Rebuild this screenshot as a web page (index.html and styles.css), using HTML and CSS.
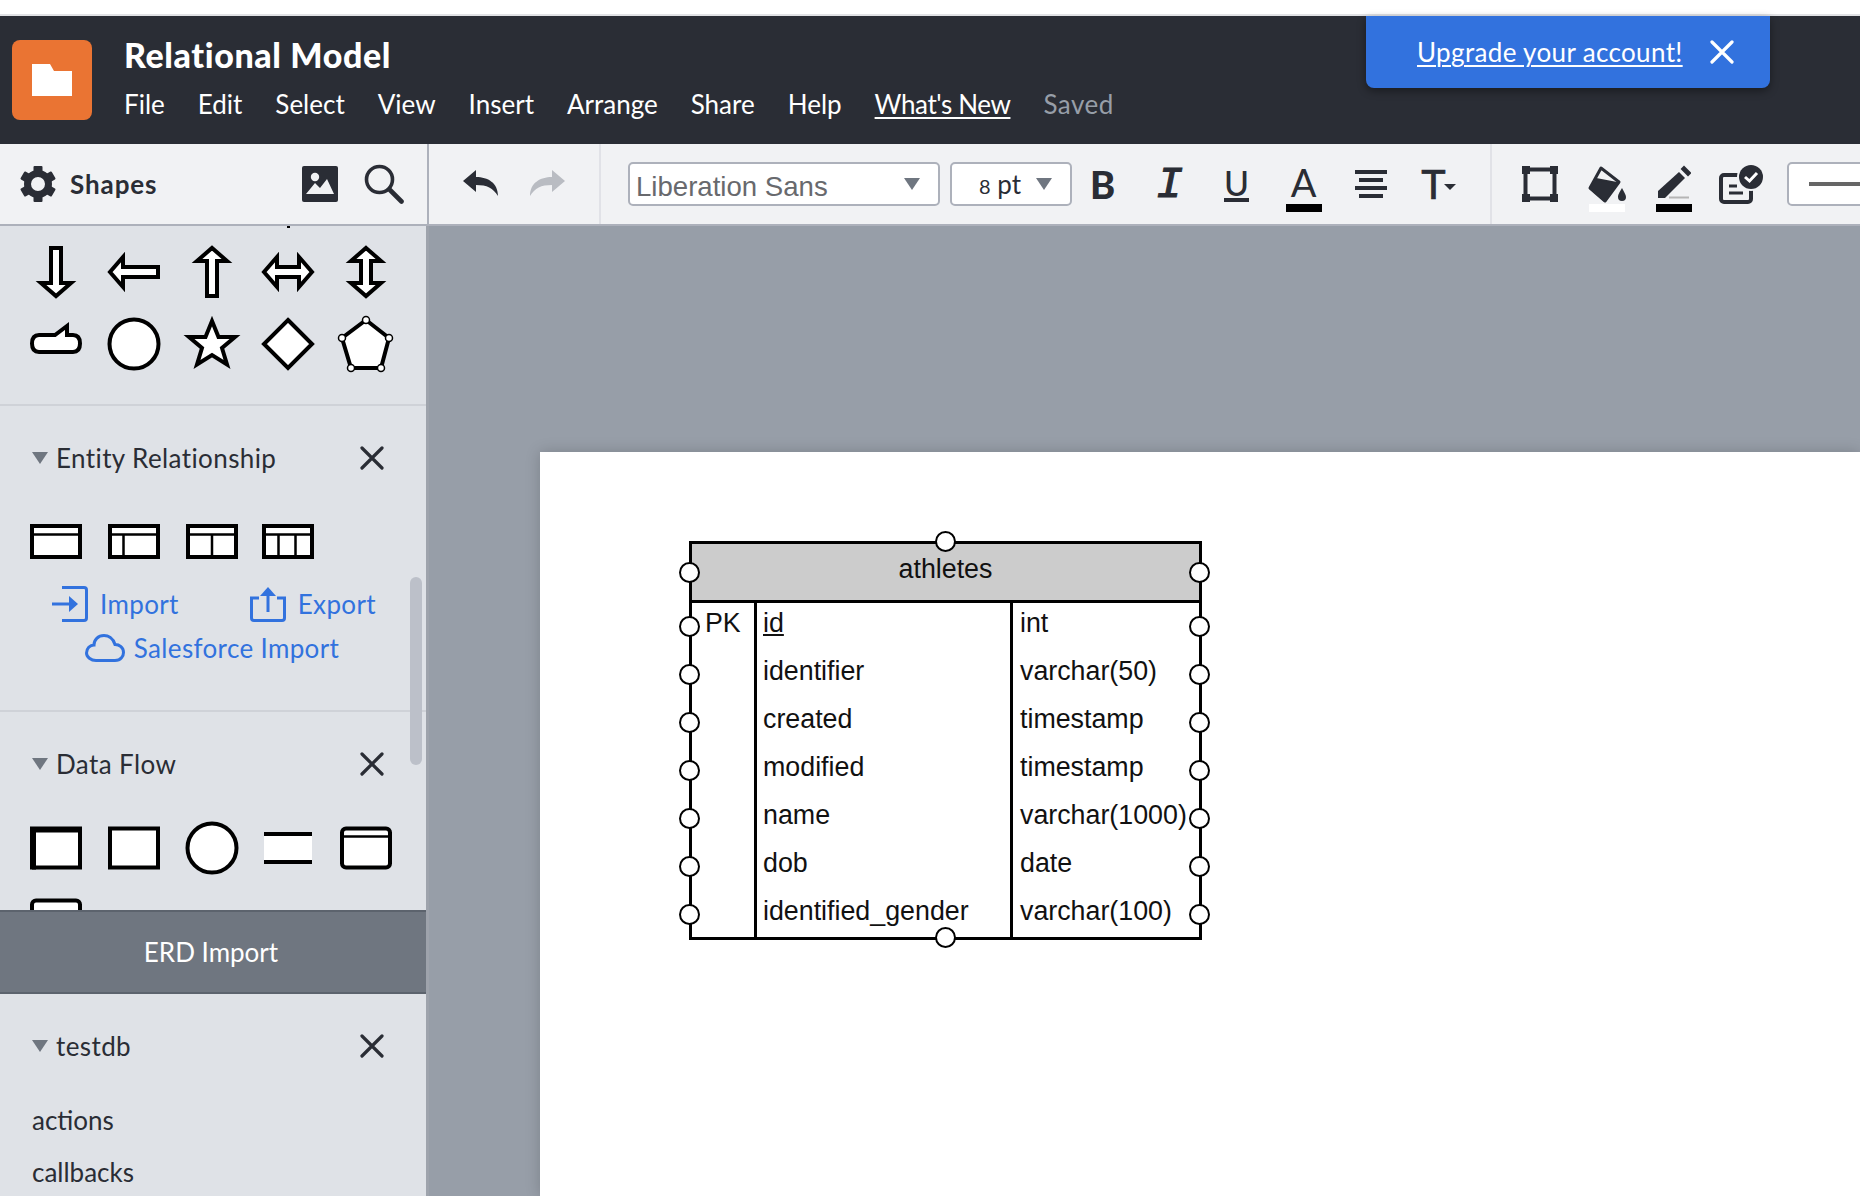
FILE: index.html
```html
<!DOCTYPE html>
<html lang="en">
<head>
    <meta charset="UTF-8">
    <title>Relational Model</title>
    <link rel="stylesheet" href="styles.css">
</head>
<body>
    <div class="top-strip"></div>

    <header class="app-bar">
        <div class="logo">
            <svg width="80" height="80" viewBox="0 0 80 80"><path d="M20 24H38L42 31H60V56H20Z" fill="#fff"/></svg>
        </div>
        <div class="doc">
            <div class="doc-title">Relational Model</div>
            <nav class="menu">
                <a>File</a>
                <a>Edit</a>
                <a>Select</a>
                <a>View</a>
                <a>Insert</a>
                <a>Arrange</a>
                <a>Share</a>
                <a>Help</a>
                <a class="menu-link">What's New</a>
                <span class="saved">Saved</span>
            </nav>
        </div>
        <div class="upgrade">
            <a class="upgrade-link">Upgrade your account!</a>
            <svg width="24" height="24" viewBox="0 0 24 24"><path d="M2 2L22 22M22 2L2 22" stroke="#fff" stroke-width="3.2" stroke-linecap="round"/></svg>
        </div>
    </header>

    <div class="toolbar">
        <div class="tb-shapes">
            <svg class="gear" width="36" height="36" viewBox="0 0 36 36" fill="#2a2d35">
                <circle cx="18" cy="18" r="10.5" fill="none" stroke="#2a2d35" stroke-width="7"/>
                <rect x="13.5" y="0" width="9" height="8" rx="1"/>
                <rect x="13.5" y="0" width="9" height="8" rx="1" transform="rotate(60 18 18)"/>
                <rect x="13.5" y="0" width="9" height="8" rx="1" transform="rotate(120 18 18)"/>
                <rect x="13.5" y="0" width="9" height="8" rx="1" transform="rotate(180 18 18)"/>
                <rect x="13.5" y="0" width="9" height="8" rx="1" transform="rotate(240 18 18)"/>
                <rect x="13.5" y="0" width="9" height="8" rx="1" transform="rotate(300 18 18)"/>
            </svg>
            <span class="tb-shapes-label">Shapes</span>
            <svg class="tb-image" width="36" height="36" viewBox="0 0 36 36">
                <rect width="36" height="36" rx="2" fill="#2a2d35"/>
                <circle cx="13" cy="11" r="4.2" fill="#f1f2f4"/>
                <path d="M4 28L13 17L18 22L25 13L32 28Z" fill="#f1f2f4"/>
            </svg>
            <svg class="tb-search" width="40" height="40" viewBox="0 0 40 40" fill="none" stroke="#2a2d35">
                <circle cx="15.5" cy="15.5" r="13" stroke-width="3.6"/>
                <path d="M26 26L37.5 37.5" stroke-width="4.6" stroke-linecap="round"/>
            </svg>
        </div>
        <div class="tb-history">
            <svg width="35" height="26" viewBox="0 0 35 26" fill="#2a2d35"><path d="M0 11L13 0V7C25 7 35 13 35 26C30 18 24 15 13 15V22Z"/></svg>
            <svg width="35" height="26" viewBox="0 0 35 26" fill="#b9bcc2"><path d="M35 11L22 0V7C10 7 0 13 0 26C5 18 11 15 22 15V22Z"/></svg>
        </div>
        <div class="tb-format">
            <div class="select select-font">
                <span class="select-text">Liberation Sans</span>
                <span class="caret"></span>
            </div>
            <div class="select select-size">
                <span class="select-size-text"><span class="size-num">8</span> pt</span>
                <span class="caret"></span>
            </div>
            <div class="tool"><span class="glyph glyph-b">B</span></div>
            <div class="tool"><span class="glyph glyph-i">I</span></div>
            <div class="tool"><span class="glyph glyph-u">U</span></div>
            <div class="tool"><span class="glyph glyph-a">A</span><i class="swatch"></i></div>
            <div class="tool">
                <svg width="32" height="40" viewBox="0 0 32 40" fill="#2a2d35">
                    <rect x="0" y="6" width="32" height="4"/>
                    <rect x="4" y="14" width="24" height="4"/>
                    <rect x="0" y="22" width="32" height="4"/>
                    <rect x="4" y="30" width="24" height="4"/>
                </svg>
            </div>
            <div class="tool"><span class="glyph glyph-t">T</span><i class="mini-caret"></i></div>
        </div>
        <div class="tb-shape-style">
            <div class="tool">
                <svg width="36" height="40" viewBox="0 0 36 40" fill="#2a2d35">
                    <rect x="3.5" y="5.5" width="29" height="29" fill="none" stroke="#2a2d35" stroke-width="4"/>
                    <rect x="0" y="2" width="8" height="8"/><rect x="28" y="2" width="8" height="8"/>
                    <rect x="0" y="30" width="8" height="8"/><rect x="28" y="30" width="8" height="8"/>
                </svg>
            </div>
            <div class="tool">
                <svg width="38" height="40" viewBox="-1 0 38 40" fill="#2a2d35">
                    <path d="M12 4L30 18L16 37L1 24Z" fill="none" stroke="#2a2d35" stroke-width="3" stroke-linejoin="round"/>
                    <path d="M1 24L7 15L28 19L16 37Z" stroke="#2a2d35" stroke-width="2" stroke-linejoin="round"/>
                    <path d="M33 24C30 29 29 31 29 33A4 4 0 0 0 37 33C37 31 35 28 33 24Z"/>
                </svg>
                <i class="swatch swatch-white"></i>
            </div>
            <div class="tool">
                <svg width="34" height="40" viewBox="0 0 34 40" fill="#2a2d35">
                    <path d="M1 34V27L22 8L28 14L8 34Z"/>
                    <path d="M25 5L27 3L33 9L31 11Z" stroke="#2a2d35" stroke-width="2"/>
                    <path d="M12 33.500H32" stroke="#b5b5b5" stroke-width="2"/>
                </svg>
                <i class="swatch"></i>
            </div>
            <div class="tool">
                <svg width="44" height="40" viewBox="0 0 44 40">
                    <rect x="2" y="11" width="30" height="27" rx="3" fill="none" stroke="#2a2d35" stroke-width="4"/>
                    <path d="M10 22H18M10 29H24" stroke="#2a2d35" stroke-width="3"/>
                    <circle cx="32" cy="13" r="14" fill="#f1f2f4"/>
                    <circle cx="32" cy="13" r="12" fill="#2a2d35"/>
                    <path d="M26 13L30.500 17L38 9" fill="none" stroke="#fff" stroke-width="3"/>
                </svg>
            </div>
            <div class="select select-line"><span class="line-sample"></span></div>
        </div>
    </div>

    <main class="workspace">
        <aside class="sidebar">
            <div class="shape-scroll">
                <div class="scrollbar"></div>

                <section class="shape-section shape-section-first">
                    <div class="sliver"></div>
                    <div class="shape-grid">
                        <svg class="sh" viewBox="0 0 60 60"><path d="M25 6H35V41H45L30 54L15 41H25Z"/></svg>
                        <svg class="sh" viewBox="0 0 60 60"><path d="M25 6H35V41H45L30 54L15 41H25Z" transform="rotate(90 30 30)"/></svg>
                        <svg class="sh" viewBox="0 0 60 60"><path d="M25 6H35V41H45L30 54L15 41H25Z" transform="rotate(180 30 30)"/></svg>
                        <svg class="sh" viewBox="0 0 60 60"><path d="M30 6L45 19H35V41H45L30 54L15 41H25V19H15Z" transform="rotate(90 30 30)"/></svg>
                        <svg class="sh" viewBox="0 0 60 60"><path d="M30 6L45 19H35V41H45L30 54L15 41H25V19H15Z"/></svg>

                        <svg class="sh" viewBox="0 0 60 60"><path d="M13 21H29L41 12V21H47Q54 21 54 29.500Q54 38 47 38H13Q6 38 6 29.500Q6 21 13 21Z"/></svg>
                        <svg class="sh" viewBox="0 0 60 60"><circle cx="30" cy="30" r="24.500"/></svg>
                        <svg class="sh" viewBox="0 0 60 60"><path d="M30 7L36.500 23H53L40 34L45 50.500L30 41L15 50.500L20 34L7 23H23.500Z"/></svg>
                        <svg class="sh" viewBox="0 0 60 60"><path d="M30 6L54 30L30 54L6 30Z"/></svg>
                        <svg class="sh" viewBox="0 0 60 60">
                            <path d="M30 6L53 24L45 54H15L6 24Z"/>
                            <g class="sh-dots"><circle cx="30" cy="6" r="3.500"/><circle cx="53" cy="24" r="3.500"/><circle cx="45" cy="54" r="3.500"/><circle cx="15" cy="54" r="3.500"/><circle cx="6" cy="24" r="3.500"/></g>
                        </svg>
                    </div>
                </section>

                <section class="shape-section">
                    <div class="section-head">
                        <span class="tri"></span>
                        <span class="section-name">Entity Relationship</span>
                        <svg class="close" width="24" height="24" viewBox="0 0 24 24"><path d="M2 2L22 22M22 2L2 22"/></svg>
                    </div>
                    <div class="shape-grid shape-grid-er">
                        <svg class="sh" viewBox="0 0 60 60"><rect x="6" y="14" width="48" height="31"/><path class="thin" d="M4 22.500H56"/></svg>
                        <svg class="sh" viewBox="0 0 60 60"><rect x="6" y="14" width="48" height="31"/><path class="thin" d="M4 22.500H56M19.500 22.500V45"/></svg>
                        <svg class="sh" viewBox="0 0 60 60"><rect x="6" y="14" width="48" height="31"/><path class="thin" d="M4 22.500H56M30 22.500V45"/></svg>
                        <svg class="sh" viewBox="0 0 60 60"><rect x="6" y="14" width="48" height="31"/><path class="thin" d="M4 22.500H56M20.500 22.500V45M37.500 22.500V45"/></svg>
                    </div>
                    <div class="import-links">
                        <div class="import-row">
                            <a class="import-link">
                                <svg width="36" height="36" viewBox="0 0 36 36" fill="none" stroke="#3272de" stroke-width="3"><path d="M10 1.500H32Q34.500 1.500 34.500 4V32Q34.500 34.500 32 34.500H10"/><path d="M0 18H24"/><path d="M17 10L26 18L17 26Z" fill="#3272de" stroke="none"/></svg>
                                Import
                            </a>
                            <a class="import-link">
                                <svg width="36" height="36" viewBox="0 0 36 36" fill="none" stroke="#3272de" stroke-width="3"><path d="M9 12H1.500V32Q1.500 34.500 4 34.500H32Q34.500 34.500 34.500 32V12H27"/><path d="M18 26V6"/><path d="M10 10L18 1L26 10Z" fill="#3272de" stroke="none"/></svg>
                                Export
                            </a>
                        </div>
                        <div class="import-row import-row-cloud">
                            <a class="import-link">
                                <svg width="40" height="28" viewBox="0 0 40 28" fill="none" stroke="#3272de" stroke-width="3"><path d="M11 26.500H30C36 26.500 38.500 22 38.500 18.500C38.500 13.500 34.500 10.500 30 10.500C28 4 23 1.500 19 1.500C13 1.500 9 6 9 11C5 11 1.500 14.500 1.500 19C1.500 23 6 26.500 11 26.500Z"/></svg>
                                Salesforce Import
                            </a>
                        </div>
                    </div>
                </section>

                <section class="shape-section">
                    <div class="section-head">
                        <span class="tri"></span>
                        <span class="section-name">Data Flow</span>
                        <svg class="close" width="24" height="24" viewBox="0 0 24 24"><path d="M2 2L22 22M22 2L2 22"/></svg>
                    </div>
                    <div class="shape-grid">
                        <svg class="sh" viewBox="0 0 60 60"><rect x="6" y="10.500" width="48" height="39"/><path class="thick" d="M8 9V51.500M4 12.500H54"/></svg>
                        <svg class="sh" viewBox="0 0 60 60"><rect x="6" y="10.500" width="48" height="39"/></svg>
                        <svg class="sh" viewBox="0 0 60 60"><circle cx="30" cy="30" r="24.500"/></svg>
                        <svg class="sh" viewBox="0 0 60 60"><rect class="bare" x="6" y="16" width="48" height="28"/><path d="M6 16H54M6 44H54"/></svg>
                        <svg class="sh" viewBox="0 0 60 60"><rect x="6" y="10.500" width="48" height="39" rx="4"/><path class="thin" d="M6 18.500H54"/></svg>
                        <svg class="sh" viewBox="0 0 60 60"><rect x="6" y="10.500" width="48" height="39" rx="4"/></svg>
                    </div>
                </section>
            </div>

            <button class="erd-import">ERD Import</button>

            <section class="db-section">
                <div class="section-head">
                    <span class="tri"></span>
                    <span class="section-name">testdb</span>
                    <svg class="close" width="24" height="24" viewBox="0 0 24 24"><path d="M2 2L22 22M22 2L2 22"/></svg>
                </div>
                <ul class="db-tables">
                    <li>actions</li>
                    <li>callbacks</li>
                </ul>
            </section>
        </aside>

        <div class="canvas">
            <div class="page">
                <div class="er-table">
                    <div class="er-row er-head">athletes</div>
                    <div class="er-row"><div class="er-cell er-key">PK</div><div class="er-cell"><u>id</u></div><div class="er-cell">int</div></div>
                    <div class="er-row"><div class="er-cell er-key"></div><div class="er-cell">identifier</div><div class="er-cell">varchar(50)</div></div>
                    <div class="er-row"><div class="er-cell er-key"></div><div class="er-cell">created</div><div class="er-cell">timestamp</div></div>
                    <div class="er-row"><div class="er-cell er-key"></div><div class="er-cell">modified</div><div class="er-cell">timestamp</div></div>
                    <div class="er-row"><div class="er-cell er-key"></div><div class="er-cell">name</div><div class="er-cell">varchar(1000)</div></div>
                    <div class="er-row"><div class="er-cell er-key"></div><div class="er-cell">dob</div><div class="er-cell">date</div></div>
                    <div class="er-row"><div class="er-cell er-key"></div><div class="er-cell">identified_gender</div><div class="er-cell">varchar(100)</div></div>
                </div>
            </div>
        </div>
    </main>
</body>
</html>
```

FILE: styles.css
```css
* {
    box-sizing: border-box;
}
html, body {
    height: 100%;
}
body {
    margin: 0;
    background-color: #fff;
    color: #2a2d35;
    font-family: 'Lato', sans-serif;
    overflow: hidden;
    display: flex;
    flex-direction: column;
}
.top-strip {
    height: 16px;
    flex: none;
    border-bottom: 2px solid #e1e2e5;
}

/* top bar */
.app-bar {
    height: 128px;
    flex: none;
    background-color: #2a2d35;
    color: #fff;
    display: flex;
    padding: 24px 0 0 12px;
    position: relative;
}
.logo {
    width: 80px;
    height: 80px;
    background-color: #ea7433;
    border-radius: 8px;
}
.logo svg {
    display: block;
}
.doc {
    margin-left: 32px;
}
.doc-title {
    font-size: 34px;
    font-weight: 900;
    letter-spacing: 0.6px;
    line-height: 38px;
    margin-top: -4px;
}
.menu {
    display: flex;
    gap: 33px;
    font-size: 26px;
    line-height: 34px;
    margin-top: 13px;
}
.menu-link {
    text-decoration: underline;
    text-underline-offset: 3px;
    letter-spacing: -0.4px;
}
.saved {
    color: #979ea8;
    letter-spacing: 0.5px;
}
.upgrade {
    position: absolute;
    top: 0;
    left: 1366px;
    width: 404px;
    height: 72px;
    background-color: #3272de;
    border-radius: 0 0 8px 8px;
    box-shadow: 0 3px 8px rgba(0, 0, 0, 0.4);
    display: flex;
    align-items: center;
    padding: 0 36px 0 51px;
    justify-content: space-between;
}
.upgrade-link {
    font-size: 26px;
    letter-spacing: 0.35px;
    text-decoration: underline;
    text-underline-offset: 3px;
    text-decoration-thickness: 2px;
}

/* toolbar */
.toolbar {
    height: 82px;
    flex: none;
    display: flex;
    background-color: #f1f2f4;
    border-bottom: 2px solid #adb1bb;
    overflow: hidden;
}
.tb-shapes {
    width: 429px;
    flex: none;
    display: flex;
    align-items: center;
    padding-left: 20px;
    border-right: 2px solid #adb1bb;
}
.tb-shapes-label {
    font-size: 26px;
    font-weight: 700;
    letter-spacing: 0.9px;
    margin-left: 14px;
    width: 232px;
}
.tb-search {
    margin-left: 26px;
}
.tb-history {
    width: 172px;
    flex: none;
    display: flex;
    align-items: center;
    gap: 32px;
    padding: 0 0 2px 34px;
    border-right: 2px solid #e1e2e7;
}
.tb-format {
    width: 891px;
    flex: none;
    display: flex;
    padding-left: 27px;
    border-right: 2px solid #e1e2e7;
}
.tb-shape-style {
    flex: none;
    display: flex;
    padding-left: 14px;
}
.select {
    height: 44px;
    margin-top: 18px;
    background-color: #fff;
    border: 2px solid #adb1bb;
    border-radius: 5px;
    display: flex;
    align-items: center;
    position: relative;
}
.select-font {
    width: 312px;
    padding-left: 6px;
}
.select-text {
    font-family: 'Liberation Sans', sans-serif;
    font-size: 27.6px;
    color: #68696d;
    padding-top: 6px;
}
.select-size {
    width: 122px;
    margin-left: 10px;
    margin-right: -3px;
    padding-left: 27px;
}
.select-size-text {
    font-size: 26px;
    color: #2a2d35;
}
.size-num {
    font-size: 20px;
}
.caret {
    position: absolute;
    top: 14px;
    right: 18px;
    border-left: 8px solid transparent;
    border-right: 8px solid transparent;
    border-top: 12px solid #6f7680;
}
.tool {
    width: 67px;
    flex: none;
    padding-top: 20px;
    display: flex;
    flex-direction: column;
    align-items: center;
    position: relative;
}
.glyph {
    height: 40px;
    line-height: 40px;
    color: #2a2d35;
    display: block;
}
.glyph-b {
    font-size: 38px;
    font-weight: 900;
}
.glyph-i {
    font-family: 'Liberation Mono', monospace;
    font-size: 45px;
    font-style: italic;
    -webkit-text-stroke: 1px #2a2d35;
    line-height: 44px;
}
.glyph-u {
    font-size: 34px;
    font-weight: 500;
    line-height: 34px;
    height: 38px;
    padding: 2px 0 0;
    border-bottom: 4px solid #2a2d35;
}
.glyph-a {
    font-size: 38px;
    line-height: 36px;
}
.glyph-t {
    font-family: 'Liberation Mono', monospace;
    font-size: 44px;
    -webkit-text-stroke: 0.6px #2a2d35;
    line-height: 47px;
    margin-right: 8px;
}
.mini-caret {
    position: absolute;
    top: 40px;
    left: 40px;
    border-left: 6px solid transparent;
    border-right: 6px solid transparent;
    border-top: 6px solid #2a2d35;
}
.swatch {
    width: 36px;
    height: 8px;
    background-color: #000;
    display: block;
}
.swatch-white {
    background-color: #fff;
}
.select-line {
    width: 120px;
    margin-left: 13px;
    flex: none;
    padding-left: 20px;
}
.line-sample {
    width: 80px;
    height: 4px;
    background-color: #666;
}

/* sidebar */
.workspace {
    flex: 1;
    display: flex;
    min-height: 0;
}
.sidebar {
    width: 429px;
    flex: none;
    background-color: #dfe2e7;
    border-right: 3px solid #9ea3ac;
    overflow: hidden;
}
.shape-scroll {
    height: 684px;
    overflow: hidden;
    position: relative;
}
.scrollbar {
    position: absolute;
    left: 410px;
    top: 351px;
    width: 12px;
    height: 188px;
    border-radius: 6px;
    background-color: #bcc0c9;
}
.sliver {
    width: 3px;
    height: 2px;
    margin-left: 287px;
    background-color: #000;
    margin-bottom: 8px;
}
.shape-section {
    padding-top: 28px;
    border-bottom: 2px solid #cfd2d8;
    padding-bottom: 40px;
}
.shape-section:last-child {
    border-bottom: none;
}
.shape-section-first {
    padding-top: 0;
    padding-bottom: 24px;
}
.section-head {
    height: 48px;
    display: flex;
    align-items: center;
    padding: 0 42px 0 32px;
}
.tri {
    border-left: 8px solid transparent;
    border-right: 8px solid transparent;
    border-top: 12px solid #6f7680;
    margin-right: 8px;
}
.section-name {
    font-size: 26px;
    letter-spacing: 0.4px;
    margin-right: auto;
}
.close path {
    stroke: #2a2d35;
    stroke-width: 3.2;
    stroke-linecap: round;
    fill: none;
}
.shape-grid {
    display: grid;
    grid-template-columns: 78px 78px 78px 74px 82px;
    grid-auto-rows: 72px;
    padding-left: 17px;
    justify-items: center;
    align-items: center;
}
.section-head + .shape-grid {
    margin-top: 24px;
}
.sh {
    width: 60px;
    height: 60px;
    display: block;
    fill: #fff;
    stroke: #000;
    stroke-width: 4;
}
.sh .thin {
    stroke-width: 2.5;
    fill: none;
}
.sh .thick {
    stroke-width: 4;
    fill: none;
}
.sh .bare {
    stroke: none;
}
.sh-dots {
    stroke-width: 1.5;
}
.import-links {
    margin-top: 4px;
}
.import-row {
    height: 44px;
    display: flex;
    justify-content: center;
    gap: 71px;
    padding-left: 2px;
}
.import-row-cloud {
    padding: 0 2px 0 0;
}
.import-row-cloud .import-link {
    gap: 9px;
}
.import-link {
    display: flex;
    align-items: center;
    gap: 12px;
    color: #3272de;
    font-size: 26px;
    letter-spacing: 0.35px;
}
.erd-import {
    display: block;
    width: 100%;
    height: 84px;
    padding: 0 4px 0 0;
    background-color: #6f7680;
    border: none;
    border-top: 2px solid #5c636d;
    border-bottom: 2px solid #5c636d;
    color: #fff;
    font-family: inherit;
    font-size: 26px;
}
.db-section {
    padding-top: 28px;
}
.db-tables {
    list-style: none;
    margin: 24px 0 0;
    padding: 0 0 0 32px;
    font-size: 26px;
    line-height: 52px;
}

/* canvas */
.canvas {
    flex: 1;
    background-color: #979ea8;
    padding: 226px 0 0 111px;
    overflow: hidden;
}
.page {
    height: 100%;
    background-color: #fff;
    box-shadow: 0 0 14px rgba(0, 0, 0, 0.18);
    padding: 89px 0 0 149px;
}
.er-table {
    width: 513px;
    border: 3px solid #000;
    position: relative;
    font-family: 'Liberation Sans', sans-serif;
    font-size: 26.8px;
    color: #111;
}
.er-table::before,
.er-table::after,
.er-row::before,
.er-row::after {
    content: "";
    position: absolute;
    width: 17px;
    height: 17px;
    background-color: #fff;
    border: 2px solid #000;
    border-radius: 50%;
}
.er-table::before,
.er-table::after {
    z-index: 1;
}
.er-table::before {
    left: 243px;
    top: -13px;
}
.er-table::after {
    left: 243px;
    bottom: -11px;
}
.er-row {
    display: grid;
    grid-template-columns: 62px 256px 1fr;
    height: 48px;
    position: relative;
}
.er-row:last-child {
    height: 46px;
}
.er-row::before {
    left: -13px;
    top: 13px;
}
.er-row::after {
    right: -11px;
    top: 13px;
}
.er-head {
    display: block;
    height: 59px;
    line-height: 51px;
    text-align: center;
    background-color: #ccc;
    border-bottom: 3px solid #000;
}
.er-head::before,
.er-head::after {
    top: 18px;
}
.er-cell {
    border-left: 3px solid #000;
    padding-left: 6px;
    line-height: 40px;
    white-space: nowrap;
}
.er-cell:last-child {
    padding-left: 7px;
}
.er-key {
    border-left: none;
    padding-left: 13px;
}
```
